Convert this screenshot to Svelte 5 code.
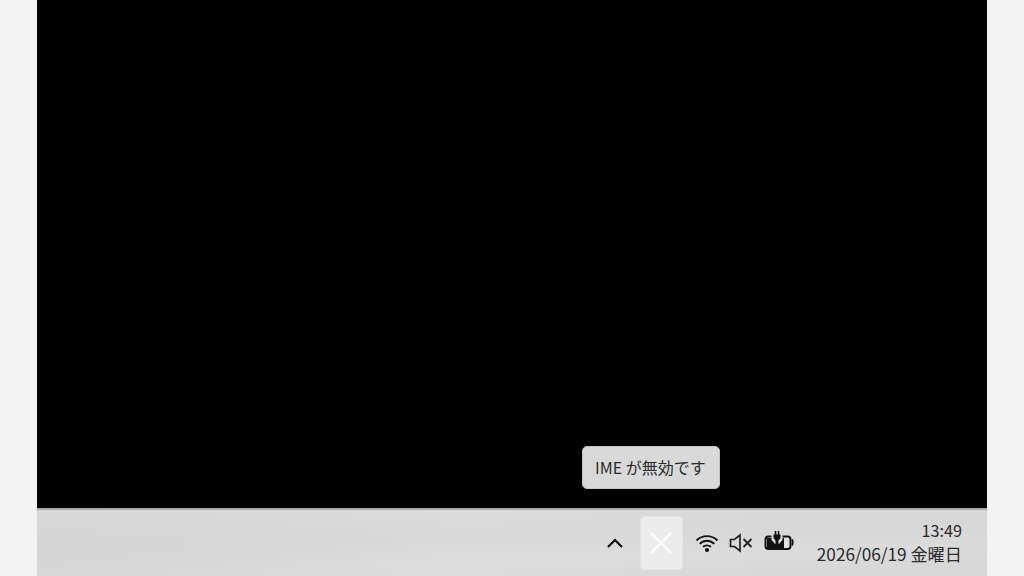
<script>
  const time = '13:49';
  const date = '2026/06/19 金曜日';
</script>

<div class="page">
  <div class="screen">
    <div class="desktop">
      <div class="tooltip">IME が無効です</div>
    </div>
    <div class="taskbar">
      <svg class="chevron" width="18" height="12" viewBox="0 0 18 12">
        <path d="M2 10 9 3l7 7" fill="none" stroke="#111" stroke-width="2.200" />
      </svg>
      <div class="ime">
        <svg width="24" height="24" viewBox="0 0 24 24">
          <path d="M2 2l20 20M22 2 2 22" fill="none" stroke="#fbfbfb" stroke-width="2.800" />
        </svg>
      </div>
      <div class="icons">
        <svg width="24" height="20" viewBox="0 0 24 20">
          <path d="M1.500 7.500c6-5.800 15-5.800 21 0M4.700 10.700c4.200-3.900 10.400-3.900 14.600 0M8 13.800c2.300-1.900 5.700-1.900 8 0" fill="none" stroke="#111" stroke-width="1.900" />
          <circle cx="12" cy="17" r="2.100" fill="#111" />
        </svg>
        <svg class="mute" width="24" height="20" viewBox="0 0 24 20">
          <path d="M1.500 6.500h4l5.500-4.500v16l-5.500-4.500h-4z" fill="none" stroke="#222" stroke-width="1.700" />
          <path d="M14.500 6l8 8M22.500 6l-8 8" fill="none" stroke="#222" stroke-width="1.800" />
        </svg>
        <svg class="battery" width="30" height="22" viewBox="0 0 30 22">
          <rect x="1.500" y="5.500" width="25" height="12.500" rx="3" fill="#e2e2e2" stroke="#111" stroke-width="2" />
          <path d="M28 8.500c1 1 1 4.500 0 6" fill="none" stroke="#111" stroke-width="1.800" />
          <path d="M3 7h17v10H3z" fill="#111" />
          <path d="M7.500 4h11v5l-3.500 4h-4l-3.500-4z" fill="#d9d9d9" />
          <path d="M11.500 0v4M14.500 0v4" stroke="#111" stroke-width="1.600" />
          <path d="M9.500 3.500h7v3.500l-2 2.500v5h-3v-5l-2-2.500z" fill="#111" />
        </svg>
      </div>
      <div class="clock">
        <div class="time">{time}</div>
        <div>{date}</div>
      </div>
    </div>
  </div>
</div>

<style>
  :global(body) {
    margin: 0;
    background: #f3f3f3;
  }

  .page {
    width: 1024px;
    height: 576px;
    overflow: hidden;
    padding-left: 37px;
    box-sizing: border-box;
    font-family: "Noto Sans CJK JP", "Noto Sans", sans-serif;
  }

  .screen {
    width: 950px;
    height: 576px;
    display: flex;
    flex-direction: column;
  }

  .desktop {
    position: relative;
    height: 508px;
    background: #000;
  }

  .tooltip {
    position: absolute;
    left: 545px;
    top: 446px;
    width: 138px;
    height: 43px;
    box-sizing: border-box;
    padding-left: 12px;
    line-height: 40px;
    border-radius: 5px;
    background: #d9d9d9;
    border: 1px solid #c4c4c4;
    color: #2a2a2a;
    font-size: 16px;
    white-space: nowrap;
  }

  .taskbar {
    flex: 1;
    display: flex;
    align-items: center;
    box-sizing: border-box;
    border-top: 2px solid #a8a8a8;
    background:
      linear-gradient(178deg, rgba(255, 255, 255, 0.04), rgba(0, 0, 0, 0.01) 40%, rgba(255, 255, 255, 0.03) 70%, rgba(0, 0, 0, 0.015)),
      linear-gradient(100deg, #d6d6d6, #dcdcdc 45%, #d9d9d9);
    padding-right: 25px;
  }

  .chevron {
    margin-left: auto;
    margin-right: 16px;
  }

  .ime {
    width: 43px;
    height: 54px;
    border-radius: 4px;
    background: #ececec;
    border: 1px solid #e4e4e4;
    box-sizing: border-box;
    display: flex;
    align-items: center;
    justify-content: center;
  }

  .icons {
    display: flex;
    align-items: center;
    margin-left: 12px;
    gap: 10px;
  }

  .battery {
    margin-left: 1px;
    margin-top: -2px;
  }

  .clock {
    margin-left: 23px;
    text-align: right;
    color: #2a2a2a;
    font-size: 17.200px;
    line-height: 23px;
    margin-top: -2px;
    white-space: nowrap;
  }

  .time {
    font-size: 16.200px;
  }
</style>
